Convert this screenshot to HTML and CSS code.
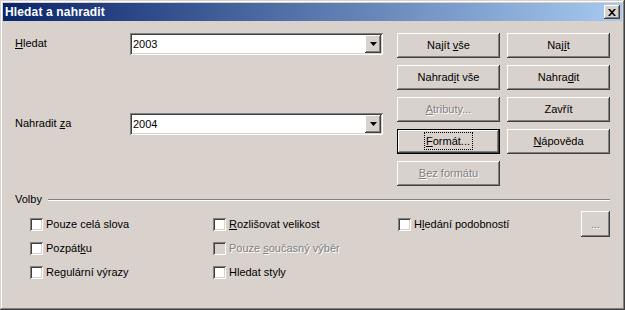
FILE: index.html
```html
<!DOCTYPE html>
<html lang="cs">
<head>
  <meta charset="UTF-8">
  <title>Hledat a nahradit</title>
  <link rel="stylesheet" href="styles.css">
</head>
<body>
  <div class="window">
    <div class="titlebar">
      <span class="title">Hledat a nahradit</span>
      <span class="close">
        <svg width="8" height="7" viewBox="0 0 8 7"><path d="M0 0h2l2 2.3 2-2.3h2l-3 3.5 3 3.5h-2l-2-2.3-2 2.3h-2l3-3.5z"/></svg>
      </span>
    </div>

    <div class="content">
      <div class="top">
        <div class="fields">
          <span class="label"><u>H</u>ledat</span>
          <div class="combo">
            <span class="combo-text">2003</span>
            <span class="combo-btn"><svg width="7" height="4" viewBox="0 0 7 4"><path d="M0 0h7L3.5 4z"/></svg></span>
          </div>
          <span class="label">Nahradit <u>z</u>a</span>
          <div class="combo">
            <span class="combo-text">2004</span>
            <span class="combo-btn"><svg width="7" height="4" viewBox="0 0 7 4"><path d="M0 0h7L3.5 4z"/></svg></span>
          </div>
        </div>

        <div class="buttons">
          <button class="btn">Najít <u>v</u>še</button>
          <button class="btn">Naj<u>í</u>t</button>
          <button class="btn">Nahrad<u>i</u>t vše</button>
          <button class="btn">Nahra<u>d</u>it</button>
          <button class="btn disabled"><u>A</u>tributy...</button>
          <button class="btn">Zavřít</button>
          <button class="btn focused"><span class="focus-rect"><u>F</u>ormát...</span></button>
          <button class="btn"><u>N</u>ápověda</button>
          <button class="btn disabled"><u>B</u>ez formátu</button>
        </div>
      </div>

      <div class="group-title">
        <span>Volby</span>
        <span class="rule"></span>
      </div>

      <div class="options">
        <div class="check"><span class="box"></span>Pouze celá slova</div>
        <div class="check"><span class="box"></span><span><u>R</u>ozlišovat velikost</span></div>
        <div class="check"><span class="box"></span><span>H<u>l</u>edání podobností</span></div>
        <button class="btn small disabled">...</button>

        <div class="check"><span class="box"></span><span>Pozpát<u>k</u>u</span></div>
        <div class="check disabled"><span class="box"></span><span>Pouze <u>s</u>oučasný výběr</span></div>
        <div></div>
        <div></div>

        <div class="check"><span class="box"></span><span>Re<u>g</u>ulární výrazy</span></div>
        <div class="check"><span class="box"></span>Hledat styly</div>
      </div>
    </div>
  </div>
</body>
</html>
```

FILE: styles.css
```css
body {
  margin: 0;
  font-family: "Liberation Sans", Arial, sans-serif;
  font-size: 11px;
  line-height: 13px;
  color: #000;
}
.window {
  width: 625px;
  height: 310px;
  box-sizing: border-box;
  padding: 3px;
  background: #d9d1cc;
  box-shadow: inset -1px -1px #404040, inset 1px 1px #d9d1cc, inset -2px -2px #808080, inset 2px 2px #fff;
}
.titlebar {
  height: 18px;
  display: flex;
  align-items: center;
  justify-content: space-between;
  padding: 0 2px;
  background: linear-gradient(to right, #0a246a, #a6caf0);
}
.title {
  color: #fff;
  font-weight: bold;
  font-size: 12px;
  letter-spacing: 0.15px;
}
.close {
  width: 16px;
  height: 14px;
  display: flex;
  align-items: center;
  justify-content: center;
  background: #d9d1cc;
  box-shadow: inset -1px -1px #404040, inset 1px 1px #fff, inset -2px -2px #808080;
}
.content {
  padding: 12px 12px 0;
}
.top {
  display: flex;
  justify-content: space-between;
}
.fields {
  display: grid;
  grid-template-columns: 115px 253px;
  grid-template-rows: 22px 22px;
  row-gap: 58px;
  align-items: center;
  align-self: flex-start;
}
.label {
  margin-top: -2px;
}
.combo {
  height: 22px;
  box-sizing: border-box;
  padding: 2px;
  display: flex;
  background: #fff;
  box-shadow: inset 1px 1px #808080, inset -1px -1px #fff, inset 2px 2px #404040, inset -2px -2px #d9d1cc;
}
.combo-text {
  flex: 1;
  padding-left: 1px;
  line-height: 18px;
}
.combo-btn {
  width: 16px;
  height: 18px;
  display: flex;
  align-items: center;
  justify-content: center;
  background: #d9d1cc;
  box-shadow: inset -1px -1px #404040, inset 1px 1px #fff, inset -2px -2px #808080;
}
.buttons {
  display: grid;
  grid-template-columns: 103px 103px;
  grid-auto-rows: 25px;
  gap: 7px;
}
.btn {
  font: inherit;
  color: #000;
  border: 0;
  padding: 0;
  background: #d9d1cc;
  box-shadow: inset -1px -1px #404040, inset 1px 1px #fff, inset -2px -2px #808080;
}
.btn.disabled {
  color: #808080;
  text-shadow: 1px 1px #fff;
}
.btn.focused {
  box-shadow: inset 0 0 0 1px #000, inset -2px -2px #404040, inset 2px 2px #fff, inset -3px -3px #808080;
}
.focus-rect {
  outline: 1px dotted #000;
  padding: 2px 2px 2px 1px;
}
.group-title {
  margin-top: 7px;
  display: flex;
  align-items: center;
}
.rule {
  flex: 1;
  margin-left: 6px;
  border-top: 1px solid #808080;
  border-bottom: 1px solid #fff;
}
.options {
  margin-top: 6px;
  padding-left: 15px;
  display: grid;
  grid-template-columns: 183px 185px 1fr 29px;
  grid-auto-rows: 24px;
  align-items: center;
}
.check {
  display: flex;
  align-items: center;
  gap: 3px;
}
.box {
  width: 13px;
  height: 13px;
  background: #fff;
  box-shadow: inset 1px 1px #808080, inset -1px -1px #fff, inset 2px 2px #404040, inset -2px -2px #d9d1cc;
}
.check.disabled {
  color: #808080;
  text-shadow: 1px 1px #fff;
}
.check.disabled .box {
  background: #d9d1cc;
}
.btn.small {
  height: 26px;
}
```
